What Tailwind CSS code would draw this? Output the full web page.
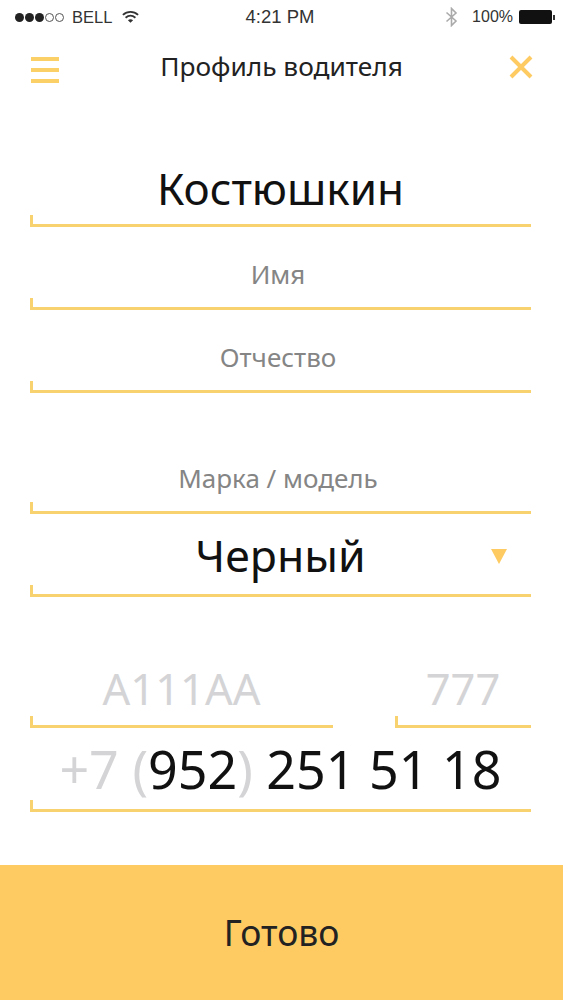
<!DOCTYPE html>
<html lang="en">
<head>
  <meta charset="UTF-8" />
  <meta name="viewport" content="width=device-width, initial-scale=1" />
  <title>Профиль водителя</title>
  <script src="https://cdn.jsdelivr.net/npm/@tailwindcss/browser@4"></script>
</head>
<body class="bg-white font-['Noto_Sans',sans-serif] text-[#111]">
  <div class="w-[563px] h-[1000px] flex flex-col overflow-hidden">

    <!-- Status bar -->
    <div class="h-[34px] shrink-0 grid grid-cols-3 items-center pl-[15px] pr-[8px] font-['Liberation_Sans',sans-serif] text-[16px] text-[#333]">
      <div class="flex items-center gap-[3px]">
        <div class="flex items-center gap-[1px]">
          <span class="w-[9px] h-[9px] rounded-full bg-[#222]"></span>
          <span class="w-[9px] h-[9px] rounded-full bg-[#222]"></span>
          <span class="w-[9px] h-[9px] rounded-full bg-[#222]"></span>
          <span class="w-[9px] h-[9px] rounded-full border border-[#555]"></span>
          <span class="w-[9px] h-[9px] rounded-full border border-[#555]"></span>
        </div>
        <span class="ml-[5px] text-[16.5px]">BELL</span>
        <svg class="ml-[7px]" width="17" height="14" viewBox="0 0 19 15" fill="none" stroke="#333" stroke-width="2">
          <path d="M1 5.2 C6 .6 13 .6 18 5.2" />
          <path d="M4 8.3 C7.4 5.4 11.6 5.4 15 8.3" />
          <path d="M9.5 14 L6.6 11 C8.3 9.8 10.7 9.8 12.4 11 Z" fill="#333" stroke="none" />
        </svg>
      </div>
      <div class="text-center text-[18.5px] whitespace-nowrap pr-[10px]">4:21 PM</div>
      <div class="flex items-center justify-end">
        <svg class="mr-[14px]" width="13" height="20" viewBox="0 0 13 20" fill="none" stroke="#aaa" stroke-width="1.6">
          <path d="M1.5 5.5 L11 14 L6.5 18.5 V1.5 L11 6 L1.5 14.5" />
        </svg>
        <span class="mr-[6px]">100%</span>
        <div class="w-[33px] h-[14px] bg-[#111] rounded-[2px]"></div>
        <div class="w-[2px] h-[5px] bg-[#333] ml-[1px]"></div>
      </div>
    </div>

    <!-- Nav -->
    <div class="h-[66px] shrink-0 flex items-center justify-between pl-[31px] pr-[30px]">
      <div class="w-[28px] mt-[6px] flex flex-col gap-[7px]">
        <div class="h-[4px] bg-[#fbd167]"></div>
        <div class="h-[4px] bg-[#fbd167]"></div>
        <div class="h-[4px] bg-[#fbd167]"></div>
      </div>
      <div class="text-[26.3px] text-[#222] mr-[5px]">Профиль водителя</div>
      <svg width="24" height="24" viewBox="0 0 24 24" stroke="#fdcb62" stroke-width="4">
        <path d="M2 2 L22 22 M22 2 L2 22" />
      </svg>
    </div>

    <!-- Form -->
    <div class="flex-1 flex flex-col pl-[30px] pr-[32px]">
      <div class="mt-[57px] h-[70px] flex items-center justify-center pb-[6px] border-b-[3px] border-[#f8d26e] relative before:absolute before:left-0 before:bottom-0 before:h-[9px] before:w-[3px] before:bg-[#f8d26e] text-[44px] text-[#111]">Костюшкин</div>

      <div class="h-[83px] flex items-center justify-center pt-[14px] pr-[5px] border-b-[3px] border-[#f8d26e] relative before:absolute before:left-0 before:bottom-0 before:h-[9px] before:w-[3px] before:bg-[#f8d26e] text-[26px] text-[#858585]">Имя</div>
      <div class="h-[83px] flex items-center justify-center pt-[14px] pr-[5px] border-b-[3px] border-[#f8d26e] relative before:absolute before:left-0 before:bottom-0 before:h-[9px] before:w-[3px] before:bg-[#f8d26e] text-[26px] text-[#858585]">Отчество</div>

      <div class="mt-[38px] h-[83px] flex items-center justify-center pt-[14px] pr-[5px] border-b-[3px] border-[#f8d26e] relative before:absolute before:left-0 before:bottom-0 before:h-[9px] before:w-[3px] before:bg-[#f8d26e] text-[26px] text-[#858585]">Марка / модель</div>
      <div class="h-[83px] flex items-center justify-center pt-[2px] border-b-[3px] border-[#f8d26e] relative before:absolute before:left-0 before:bottom-0 before:h-[9px] before:w-[3px] before:bg-[#f8d26e] text-[44.5px] text-[#111]">
        Черный
        <svg class="absolute right-[24px] top-[35px]" width="16" height="15" viewBox="0 0 16 15"><path d="M0 0 H16 L8 15 Z" fill="#fdcb62" /></svg>
      </div>

      <div class="mt-[47px] flex justify-between">
        <div class="w-[303px] h-[84px] flex items-center justify-center pt-[8px] border-b-[3px] border-[#f8d26e] relative before:absolute before:left-0 before:bottom-0 before:h-[9px] before:w-[3px] before:bg-[#f8d26e] text-[43.5px] text-[#d4d4d6]">A111AA</div>
        <div class="w-[136px] h-[84px] flex items-center justify-center pt-[8px] border-b-[3px] border-[#f8d26e] relative before:absolute before:left-0 before:bottom-0 before:h-[9px] before:w-[3px] before:bg-[#f8d26e] text-[43.5px] text-[#d4d4d6]">777</div>
      </div>
      <div class="h-[84px] flex items-center justify-center border-b-[3px] border-[#f8d26e] relative before:absolute before:left-0 before:bottom-0 before:h-[9px] before:w-[3px] before:bg-[#f8d26e] text-[52px] text-[#111] whitespace-pre"><span class="text-[#d4d4d6]">+7 (</span>952<span class="text-[#d4d4d6]">)</span> 251 51 18</div>
    </div>

    <!-- Done button -->
    <div class="h-[135px] shrink-0 bg-[#fecb62] flex items-center justify-center text-[35.5px] text-[#222]">Готово</div>
  </div>
</body>
</html>
